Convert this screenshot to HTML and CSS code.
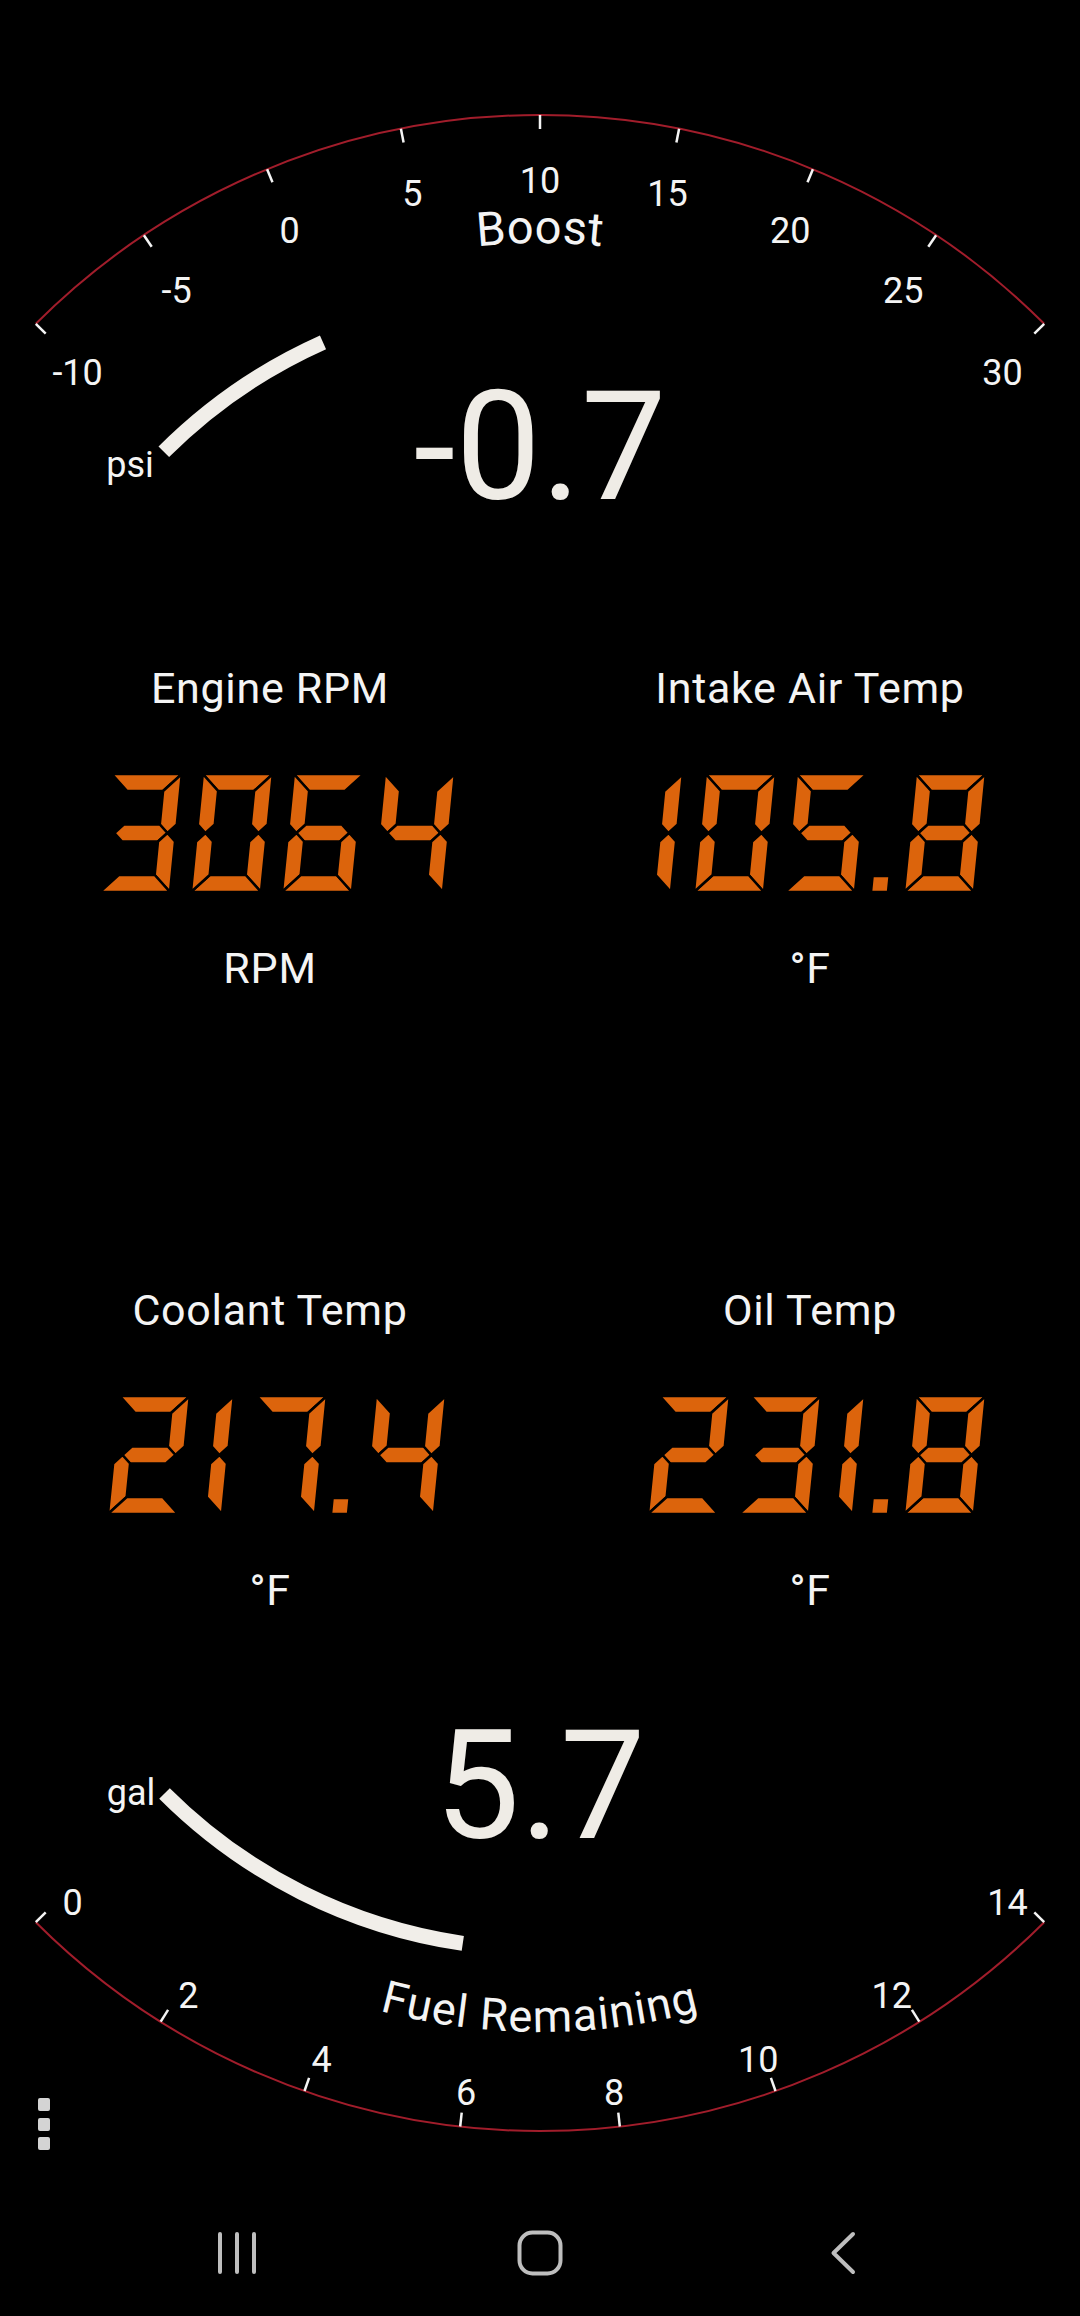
FILE: index.html
```html
<!DOCTYPE html>
<html lang="en">
<head>
    <meta charset="UTF-8">
    <meta name="viewport" content="width=device-width, initial-scale=1.0">
    <title>Dashboard</title>
    <link rel="stylesheet" href="styles.css">
</head>
<body>
    <div class="screen">
        <div class="gauge gauge-top">
            <svg id="boost" class="dial" viewBox="0 0 1080 600" width="1080" height="600">
                <defs>
                    <path id="boost-title-path" d="M164 379.9 A585 585 0 0 1 916 379.9"/>
                </defs>
                <g class="scale"></g>
                <path class="needle"/>
                <text class="dial-title boost-title"><textPath href="#boost-title-path" startOffset="50%">Boost</textPath></text>
                <text class="dial-unit" x="130" y="477">psi</text>
                <text class="dial-value" x="540" y="499">-0.7</text>
            </svg>
        </div>

        <div class="readouts">
            <div class="readout">
                <div class="readout-title">Engine RPM</div>
                <div class="lcd" data-value="3064"></div>
                <div class="readout-unit">RPM</div>
            </div>
            <div class="readout">
                <div class="readout-title">Intake Air Temp</div>
                <div class="lcd" data-value="105.8"></div>
                <div class="readout-unit">°F</div>
            </div>
            <div class="readout">
                <div class="readout-title">Coolant Temp</div>
                <div class="lcd" data-value="217.4"></div>
                <div class="readout-unit">°F</div>
            </div>
            <div class="readout">
                <div class="readout-title">Oil Temp</div>
                <div class="lcd" data-value="231.8"></div>
                <div class="readout-unit">°F</div>
            </div>
        </div>

        <div class="gauge gauge-bottom">
            <svg id="fuel" class="dial" viewBox="0 1615 1080 575" width="1080" height="575">
                <defs>
                    <path id="fuel-title-path" d="M145.3 1888.3 A614 614 0 0 0 934.7 1888.3"/>
                </defs>
                <g class="scale"></g>
                <path class="needle"/>
                <text class="dial-title fuel-title"><textPath href="#fuel-title-path" startOffset="50%">Fuel Remaining</textPath></text>
                <text class="dial-unit" x="131" y="1805">gal</text>
                <text class="dial-value" x="540" y="1838">5.7</text>
            </svg>
            <button class="menu-btn" aria-label="Menu"><span></span><span></span><span></span></button>
        </div>

        <nav class="navbar">
            <button class="nav-btn" aria-label="Recent apps">
                <svg viewBox="0 0 60 60" width="60" height="60">
                    <path d="M13 11 V49 M30 11 V49 M47 11 V49"/>
                </svg>
            </button>
            <button class="nav-btn" aria-label="Home">
                <svg viewBox="0 0 60 60" width="60" height="60">
                    <rect x="9.5" y="9.5" width="41" height="41" rx="13"/>
                </svg>
            </button>
            <button class="nav-btn" aria-label="Back">
                <svg viewBox="0 0 60 60" width="60" height="60">
                    <path d="M40 11 L20.5 30 L40 49"/>
                </svg>
            </button>
        </nav>
    </div>

    <script>
        const SVG_NS = 'http://www.w3.org/2000/svg';

        const dials = [
            { id: 'boost', cx: 540, cy: 828, dir: -1, r: 713, min: -10, max: 30, step: 5,
              labelCy: 834, labelR: 654, needleR: 532, value: -0.7 },
            { id: 'fuel', cx: 540, cy: 1418, dir: 1, r: 713, min: 0, max: 14, step: 2,
              labelCy: 1435, labelR: 661, needleR: 531, value: 5.7 }
        ];

        function el(name, attrs) {
            const node = document.createElementNS(SVG_NS, name);
            for (const key in attrs) node.setAttribute(key, attrs[key]);
            return node;
        }

        function point(d, r, deg, cy) {
            const a = deg * Math.PI / 180;
            const x = d.cx + r * Math.sin(a);
            const y = (cy === undefined ? d.cy : cy) + d.dir * r * Math.cos(a);
            return [+x.toFixed(1), +y.toFixed(1)];
        }

        function drawDial(d) {
            const svg = document.getElementById(d.id);
            const scale = svg.querySelector('.scale');
            const sweep = d.dir < 0 ? 1 : 0;

            const [x0, y0] = point(d, d.r, -45);
            const [x1, y1] = point(d, d.r, 45);
            scale.appendChild(el('path', { class: 'arc', d: `M${x0} ${y0} A${d.r} ${d.r} 0 0 ${sweep} ${x1} ${y1}` }));

            const steps = (d.max - d.min) / d.step;
            for (let i = 0; i <= steps; i++) {
                const deg = -45 + i * 90 / steps;
                const [ax, ay] = point(d, d.r, deg);
                const [bx, by] = point(d, d.r - 14, deg);
                scale.appendChild(el('line', { class: 'tick', x1: ax, y1: ay, x2: bx, y2: by }));

                const [lx, ly] = point(d, d.labelR, deg, d.labelCy);
                const label = el('text', { class: 'label', x: lx, y: ly + 13 });
                label.textContent = d.min + i * d.step;
                scale.appendChild(label);
            }

            const end = -45 + 90 * (d.value - d.min) / (d.max - d.min);
            const [nx0, ny0] = point(d, d.needleR, -45);
            const [nx1, ny1] = point(d, d.needleR, end);
            svg.querySelector('.needle').setAttribute('d',
                `M${nx0} ${ny0} A${d.needleR} ${d.needleR} 0 0 ${sweep} ${nx1} ${ny1}`);
        }

        // seven segment readout
        const W = 70, H = 118, T = 17, K = 0.1, HT = T / 2, M = H / 2;
        const SEGMENTS = {
            a: [[0, 0], [W, 0], [W - T, T], [T, T]],
            b: [[W, 0], [W, M - HT], [W - HT, M], [W - T, M - HT], [W - T, T]],
            c: [[W, H], [W, M + HT], [W - HT, M], [W - T, M + HT], [W - T, H - T]],
            d: [[0, H], [W, H], [W - T, H - T], [T, H - T]],
            e: [[0, H], [0, M + HT], [HT, M], [T, M + HT], [T, H - T]],
            f: [[0, 0], [0, M - HT], [HT, M], [T, M - HT], [T, T]],
            g: [[HT, M], [T, M - HT], [W - T, M - HT], [W - HT, M], [W - T, M + HT], [T, M + HT]]
        };
        const DOT = [[0, H - 16], [17, H - 16], [17, H], [0, H]];
        const DIGITS = {
            '0': 'abcdef', '1': 'bc', '2': 'abged', '3': 'abgcd', '4': 'fgbc',
            '5': 'afgcd', '6': 'afgedc', '7': 'abc', '8': 'abcdefg', '9': 'abcdfg', '-': 'g'
        };

        function drawLcd(box) {
            const value = box.dataset.value;
            const svg = el('svg', { class: 'lcd-digits', role: 'img' });
            const title = el('title', {});
            title.textContent = value;
            svg.appendChild(title);
            box.setAttribute('aria-label', value);
            let cursor = 0, maxX = 0;

            function addShape(pts, dx) {
                const skewed = pts.map(([x, y]) => {
                    const sx = x + dx + (H - y) * K;
                    maxX = Math.max(maxX, sx);
                    return sx.toFixed(1) + ',' + y.toFixed(1);
                });
                svg.appendChild(el('polygon', { points: skewed.join(' ') }));
            }

            for (const ch of value) {
                if (ch === '.') {
                    addShape(DOT, cursor - 5);
                    cursor += 28;
                } else if (ch === '1') {
                    for (const s of DIGITS['1']) addShape(SEGMENTS[s], cursor + 6 - (W - T));
                    cursor += 46;
                } else {
                    for (const s of DIGITS[ch] || '') addShape(SEGMENTS[s], cursor);
                    cursor += 91;
                }
            }

            svg.setAttribute('width', Math.ceil(maxX));
            svg.setAttribute('height', H);
            svg.setAttribute('viewBox', `0 0 ${Math.ceil(maxX)} ${H}`);
            box.appendChild(svg);
        }

        dials.forEach(drawDial);
        document.querySelectorAll('.lcd').forEach(drawLcd);
    </script>
</body>
</html>
```

FILE: styles.css
```css
body {
    margin: 0;
    padding: 0;
    background-color: #000;
    color: #f4f4f4;
    font-family: Roboto, 'Noto Sans', Arial, sans-serif;
}

.screen {
    width: 1080px;
    height: 2316px;
    display: flex;
    flex-direction: column;
    overflow: hidden;
}

.gauge {
    position: relative;
    flex: none;
}

.gauge svg {
    display: block;
}

.gauge-top {
    height: 600px;
}

.gauge-bottom {
    height: 575px;
}

.dial .arc {
    fill: none;
    stroke: #a11d2b;
    stroke-width: 2;
}

.dial .tick {
    stroke: #f4f4f4;
    stroke-width: 2.5;
}

.dial .label {
    font-size: 36px;
    fill: #f4f4f4;
    text-anchor: middle;
}

.dial .needle {
    fill: none;
    stroke: #f1eee9;
    stroke-width: 15;
}

.dial-title {
    fill: #f4f4f4;
    text-anchor: middle;
}

.boost-title {
    font-size: 47px;
    letter-spacing: 0.5px;
}

.fuel-title {
    font-size: 45px;
    letter-spacing: 1.2px;
}

.dial-unit {
    font-size: 36px;
    fill: #f4f4f4;
    text-anchor: middle;
}

.dial-value {
    font-size: 152px;
    fill: #efece6;
    text-anchor: middle;
}

/* digital readouts */
.readouts {
    flex: none;
    display: grid;
    grid-template-columns: 1fr 1fr;
    grid-auto-rows: 330px;
    row-gap: 292px;
    padding-top: 63px;
}

.readout {
    display: flex;
    flex-direction: column;
    align-items: center;
}

.readout-title,
.readout-unit {
    font-size: 43px;
    line-height: 50px;
    letter-spacing: 0.7px;
    white-space: nowrap;
}

.lcd {
    margin-top: 61px;
    height: 118px;
    padding-left: 14px;
    display: flex;
    justify-content: center;
}

.lcd-digits polygon {
    fill: #dc640c;
    stroke: #000;
    stroke-width: 2.5;
    stroke-linejoin: bevel;
}

.readout-unit {
    margin-top: 51px;
}

.menu-btn {
    position: absolute;
    left: 38px;
    top: 483px;
    display: flex;
    flex-direction: column;
    gap: 6.5px;
    padding: 0;
    border: none;
    background: none;
}

.menu-btn span {
    width: 12px;
    height: 13px;
    border-radius: 2px;
    background-color: #d4d4d4;
}

/* system navigation */
.navbar {
    flex: none;
    height: 126px;
    display: flex;
    justify-content: center;
    align-items: center;
    gap: 243px;
}

.nav-btn {
    width: 60px;
    height: 60px;
    padding: 0;
    border: none;
    background: none;
}

.nav-btn svg {
    display: block;
    fill: none;
    stroke: #bebebe;
    stroke-width: 4;
    stroke-linecap: round;
    stroke-linejoin: round;
}
```
